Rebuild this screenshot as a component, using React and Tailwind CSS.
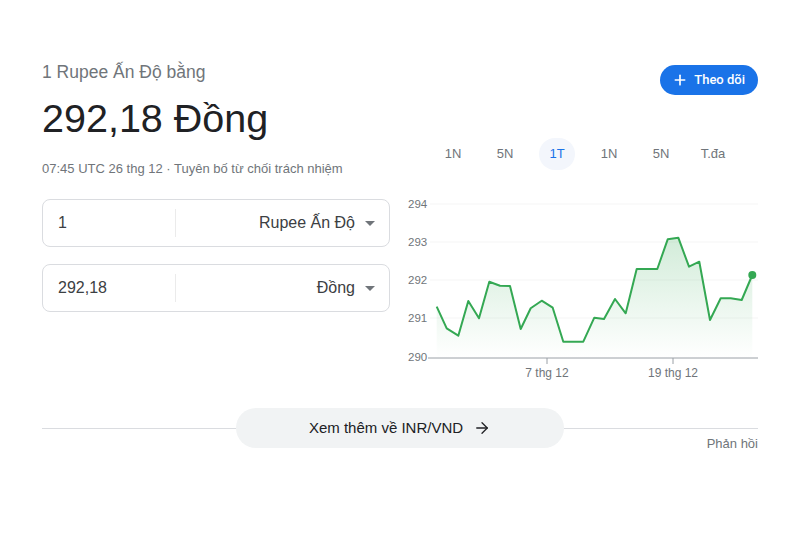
import { Plus, ArrowRight } from "lucide-react";

const points = [
  [436.7, 306.7], [446.7, 328.3], [458.3, 335.7], [468.3, 301], [479, 318.3],
  [489.3, 281.7], [500, 285.7], [510, 286], [520.7, 329], [530.7, 308.3],
  [541.7, 300.7], [552.7, 307.7], [563.3, 341.7], [573.3, 341.7], [583.3, 341.7],
  [594.3, 317.7], [604, 319], [615, 299], [625.7, 313.3], [636.7, 269],
  [646.7, 269], [657.3, 269], [667.7, 239.3], [678.3, 237.7], [689, 266.7],
  [699.3, 261.7], [710, 320], [720.7, 298.3], [730.7, 298.3], [741.7, 300],
  [752.3, 275],
];

function Chart() {
  const line = points.map((p, i) => (i === 0 ? "M" : "L") + p[0] + " " + p[1]).join(" ");
  const area = line + " L752.3 358 L436.7 358 Z";
  const last = points[points.length - 1];
  const yLabels = [
    ["294", 204],
    ["293", 242],
    ["292", 280],
    ["291", 318],
    ["290", 357],
  ];
  return (
    <svg width="350" height="190" viewBox="408 195 350 190" className="block">
      <defs>
        <linearGradient id="fill" x1="0" y1="0" x2="0" y2="1">
          <stop offset="0%" stopColor="#34a853" stopOpacity="0.22" />
          <stop offset="100%" stopColor="#34a853" stopOpacity="0" />
        </linearGradient>
      </defs>
      {yLabels.slice(0, 4).map(([t, y]) => (
        <line key={t} x1="430" x2="758" y1={y} y2={y} stroke="#f5f5f5" strokeWidth="1" />
      ))}
      {yLabels.map(([t, y]) => (
        <text
          key={t}
          x="408"
          y={y + 4}
          fontSize="11.5"
          fill="#70757a"
          fontFamily="Liberation Sans, Arial, sans-serif"
        >
          {t}
        </text>
      ))}
      <path d={area} fill="url(#fill)" />
      <path d={line} fill="none" stroke="#34a853" strokeWidth="2" strokeLinejoin="round" />
      <circle cx={last[0]} cy={last[1]} r="4" fill="#34a853" />
      <line x1="428" x2="758" y1="358" y2="358" stroke="#9aa0a6" strokeWidth="1" />
      <line x1="547" x2="547" y1="358" y2="364" stroke="#9aa0a6" strokeWidth="1" />
      <line x1="673" x2="673" y1="358" y2="364" stroke="#9aa0a6" strokeWidth="1" />
      <text x="547" y="377" fontSize="12" fill="#70757a" textAnchor="middle" fontFamily="Liberation Sans, Arial, sans-serif">
        7 thg 12
      </text>
      <text x="673" y="377" fontSize="12" fill="#70757a" textAnchor="middle" fontFamily="Liberation Sans, Arial, sans-serif">
        19 thg 12
      </text>
    </svg>
  );
}

function CurrencyBox({ value, currency }) {
  return (
    <div className="flex h-[48px] items-center rounded-lg border border-[#dadce0]">
      <div className="w-[132px] pl-[15px] text-[16px] text-[#3c4043]">{value}</div>
      <div className="h-[28px] w-px bg-[#ebebeb]" />
      <div className="flex flex-1 items-center justify-end gap-[10px] pr-[14px] text-[16px] text-[#3c4043]">
        <span>{currency}</span>
        <span className="h-0 w-0 border-x-[5px] border-t-[5px] border-x-transparent border-t-[#70757a]" />
      </div>
    </div>
  );
}

export default function App() {
  const tabs = ["1N", "5N", "1T", "1N", "5N", "T.đa"];
  return (
    <div className="min-h-[533px] bg-white font-['Liberation_Sans',Arial,sans-serif]">
      <div className="w-[716px] ml-[42px] pt-[60px]">
        <div className="flex gap-[18px]">
          <div className="w-[348px]">
            <div className="text-[17.5px] leading-[24px] text-[#70757a]">1 Rupee Ấn Độ bằng</div>
            <div className="mt-[8px] text-[39.5px] leading-[52px] text-[#202124]">292,18 Đồng</div>
            <div className="mt-[17px] text-[13px] leading-[16px] text-[#70757a]">
              07:45 UTC 26 thg 12 · Tuyên bố từ chối trách nhiệm
            </div>
            <div className="mt-[22px] flex flex-col gap-[17px]">
              <CurrencyBox value="1" currency="Rupee Ấn Độ" />
              <CurrencyBox value="292,18" currency="Đồng" />
            </div>
          </div>
          <div className="flex-1">
            <div className="flex justify-end pt-[5px]">
              <button className="flex h-[30px] items-center gap-[6px] rounded-full bg-[#1a73e8] pl-[12px] pr-[13px] font-['Roboto',sans-serif] text-[13px] font-medium text-white">
                <Plus size={16} strokeWidth={2.5} />
                Theo dõi
              </button>
            </div>
            <div className="mt-[43px] flex pl-[19px]">
              {tabs.map((t, i) => (
                <div
                  key={i}
                  className={
                    i === 2
                      ? "flex h-[32px] w-[36px] items-center justify-center rounded-full bg-[#f3f6fc] text-[13px] text-[#1a73e8] mx-[8px]"
                      : "flex h-[32px] w-[36px] items-center justify-center text-[13px] text-[#70757a] mx-[8px]"
                  }
                >
                  {t}
                </div>
              ))}
            </div>
            <div className="mt-[25px]">
              <Chart />
            </div>
          </div>
        </div>
        <div className="mt-[23px] flex items-center">
          <div className="h-px flex-1 bg-[#dadce0]" />
          <div className="flex h-[40px] w-[328px] items-center justify-center gap-[10px] rounded-full bg-[#f1f3f4] text-[15px] text-[#202124]">
            Xem thêm về INR/VND
            <ArrowRight size={18} strokeWidth={1.75} />
          </div>
          <div className="h-px flex-1 bg-[#dadce0]" />
        </div>
        <div className="-mt-[12px] text-right text-[13px] leading-[16px] text-[#70757a]">Phản hồi</div>
      </div>
    </div>
  );
}
